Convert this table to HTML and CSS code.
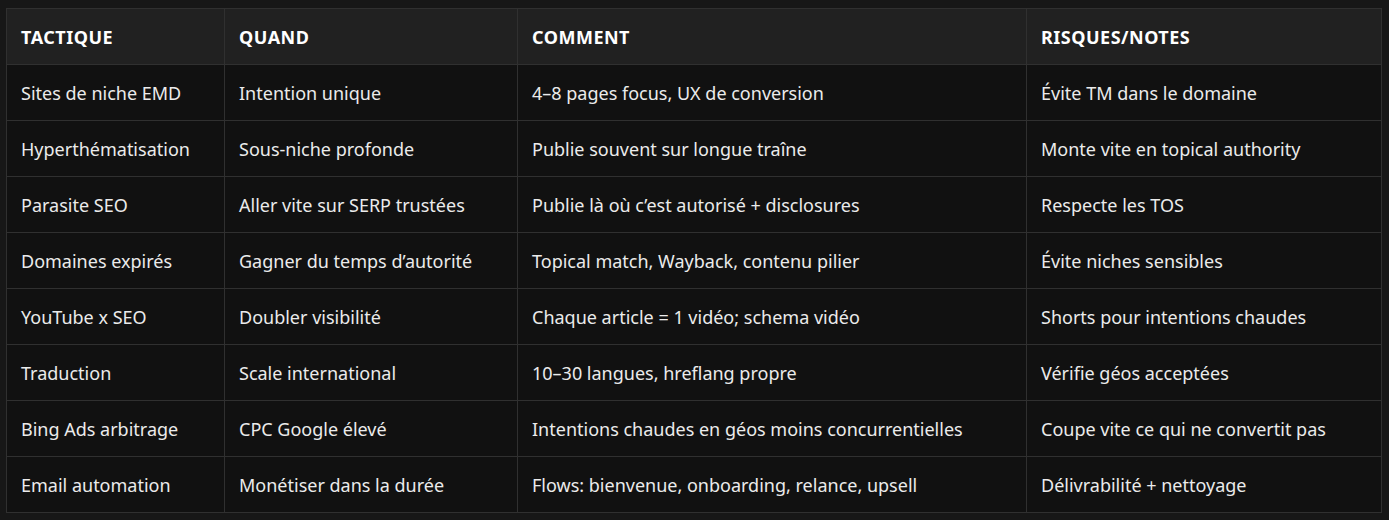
FILE: index.html
```html
<!DOCTYPE html>
<html>
<head>
    <title>Tactiques SEO</title>
    <link rel="stylesheet" href="styles.css">
</head>
<body>
    <div class="wrap">
        <table class="tactics">
            <colgroup>
                <col class="c1">
                <col class="c2">
                <col class="c3">
                <col class="c4">
            </colgroup>
            <thead>
                <tr>
                    <th>TACTIQUE</th>
                    <th>QUAND</th>
                    <th>COMMENT</th>
                    <th>RISQUES/NOTES</th>
                </tr>
            </thead>
            <tbody>
                <tr>
                    <td>Sites de niche EMD</td>
                    <td>Intention unique</td>
                    <td>4–8 pages focus, UX de conversion</td>
                    <td>Évite TM dans le domaine</td>
                </tr>
                <tr>
                    <td>Hyperthématisation</td>
                    <td>Sous-niche profonde</td>
                    <td>Publie souvent sur longue traîne</td>
                    <td>Monte vite en topical authority</td>
                </tr>
                <tr>
                    <td>Parasite SEO</td>
                    <td>Aller vite sur SERP trustées</td>
                    <td>Publie là où c’est autorisé + disclosures</td>
                    <td>Respecte les TOS</td>
                </tr>
                <tr>
                    <td>Domaines expirés</td>
                    <td>Gagner du temps d’autorité</td>
                    <td>Topical match, Wayback, contenu pilier</td>
                    <td>Évite niches sensibles</td>
                </tr>
                <tr>
                    <td>YouTube x SEO</td>
                    <td>Doubler visibilité</td>
                    <td>Chaque article = 1 vidéo; schema vidéo</td>
                    <td>Shorts pour intentions chaudes</td>
                </tr>
                <tr>
                    <td>Traduction</td>
                    <td>Scale international</td>
                    <td>10–30 langues, hreflang propre</td>
                    <td>Vérifie géos acceptées</td>
                </tr>
                <tr>
                    <td>Bing Ads arbitrage</td>
                    <td>CPC Google élevé</td>
                    <td>Intentions chaudes en géos moins concurrentielles</td>
                    <td>Coupe vite ce qui ne convertit pas</td>
                </tr>
                <tr>
                    <td>Email automation</td>
                    <td>Monétiser dans la durée</td>
                    <td>Flows: bienvenue, onboarding, relance, upsell</td>
                    <td>Délivrabilité + nettoyage</td>
                </tr>
            </tbody>
        </table>
    </div>
</body>
</html>
```

FILE: styles.css
```css
body {
    margin: 0;
    background: #171717;
    font-family: "Noto Sans", "Open Sans", sans-serif;
    color: #ebebeb;
}
.wrap {
    padding: 8px 8px 8px 6px;
}
.tactics {
    width: 1375px;
    border-collapse: collapse;
    table-layout: fixed;
    background: #111111;
    font-size: 18px;
}
.c1 { width: 218px; }
.c2 { width: 293px; }
.c3 { width: 509px; }
.c4 { width: 355px; }
.tactics th,
.tactics td {
    border: 1px solid #303030;
    height: 55px;
    padding: 0 14px;
    text-align: left;
    white-space: nowrap;
}
.tactics th {
    background: #212121;
    color: #ffffff;
    font-weight: 700;
    letter-spacing: 0.5px;
}
```
